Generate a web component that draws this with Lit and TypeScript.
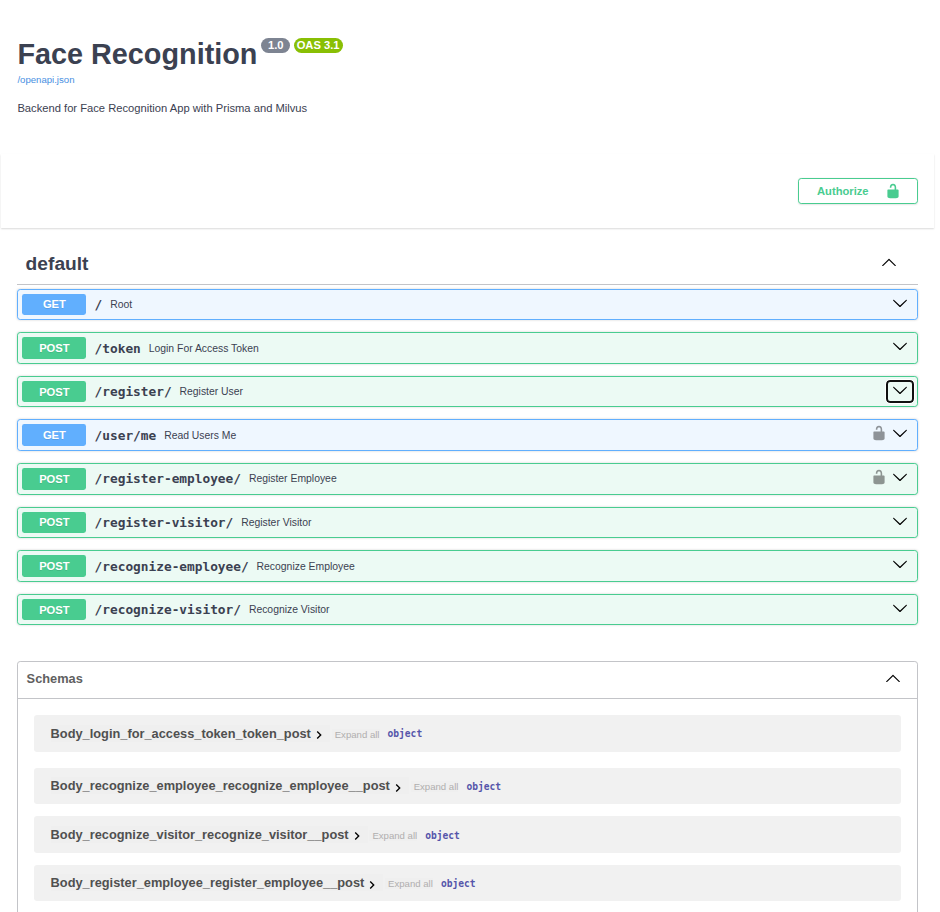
import { LitElement, html, css, svg, nothing } from "lit";
import { customElement, property } from "lit/decorators.js";
import { classMap } from "lit/directives/class-map.js";

const ARROW_UP =
  "M 17.418 14.908 C 17.69 15.176 18.127 15.176 18.397 14.908 C 18.667 14.64 18.668 14.207 18.397 13.939 L 10.489 6.109 C 10.219 5.841 9.782 5.841 9.51 6.109 L 1.602 13.939 C 1.332 14.207 1.332 14.64 1.602 14.908 C 1.873 15.176 2.311 15.176 2.581 14.908 L 10 7.767 L 17.418 14.908 Z";
const ARROW_DOWN =
  "M17.418 6.109c.272-.268.709-.268.979 0s.271.701 0 .969l-7.908 7.83c-.27.268-.707.268-.979 0l-7.908-7.83c-.27-.268-.27-.701 0-.969.271-.268.709-.268.979 0L10 13.25l7.418-7.141z";
const UNLOCKED =
  "M15.8 8H14V5.6C14 2.703 12.665 1 10 1 7.334 1 6 2.703 6 5.6V6h2v-.801C8 3.754 8.797 3 10 3c1.203 0 2 .754 2 2.199V8H4c-.553 0-1 .646-1 1.199V17c0 .549.428 1.139.951 1.307l1.197.387C5.672 18.861 6.55 19 7.1 19h5.8c.549 0 1.428-.139 1.951-.307l1.196-.387c.524-.167.953-.757.953-1.306V9.199C17 8.646 16.352 8 15.8 8z";

const icon = (d: string, cls: string) => html`<svg class=${cls} width="16" height="16" viewBox="0 0 20 20" aria-hidden="true">${svg`<path d=${d}></path>`}</svg>`;

interface Operation {
  method: "GET" | "POST";
  path: string;
  summary: string;
  secured?: boolean;
  focused?: boolean;
}

const OPERATIONS: Operation[] = [
  { method: "GET", path: "/", summary: "Root" },
  { method: "POST", path: "/token", summary: "Login For Access Token" },
  { method: "POST", path: "/register/", summary: "Register User", focused: true },
  { method: "GET", path: "/user/me", summary: "Read Users Me", secured: true },
  { method: "POST", path: "/register-employee/", summary: "Register Employee", secured: true },
  { method: "POST", path: "/register-visitor/", summary: "Register Visitor" },
  { method: "POST", path: "/recognize-employee/", summary: "Recognize Employee" },
  { method: "POST", path: "/recognize-visitor/", summary: "Recognize Visitor" },
];

const SCHEMAS = [
  "Body_login_for_access_token_token_post",
  "Body_recognize_employee_recognize_employee__post",
  "Body_recognize_visitor_recognize_visitor__post",
  "Body_register_employee_register_employee__post",
];

@customElement("operation-row")
export class OperationRow extends LitElement {
  @property({ attribute: false }) op!: Operation;

  static styles = css`
    :host {
      display: block;
    }
    .row {
      display: flex;
      align-items: center;
      box-sizing: border-box;
      height: 31.6px;
      padding: 4px 9px 4px 4px;
      border: 1px solid #49cc90;
      border-radius: 3.2px;
      background: rgba(73, 204, 144, 0.1);
      box-shadow: 0 0 2.4px rgba(0, 0, 0, 0.19);
    }
    .row.get {
      border-color: #61affe;
      background: rgba(97, 175, 254, 0.1);
    }
    .method {
      box-sizing: border-box;
      width: 64px;
      height: 21.6px;
      padding: 0.8px 0 0 0.8px;
      line-height: 21.6px;
      border-radius: 2.4px;
      background: #49cc90;
      color: #fff;
      font-size: 11.2px;
      font-weight: 700;
      text-align: center;
      text-shadow: 0 0.8px 0 rgba(0, 0, 0, 0.1);
    }
    .get .method {
      background: #61affe;
    }
    .path {
      margin-left: 8.6px;
      font: 600 12.8px/15px "DejaVu Sans Mono", monospace;
      color: #3b4151;
      padding-top: 0.2px;
    }
    .summary {
      flex: 1;
      margin-left: 7.9px;
      padding-top: 1.2px;
      font-size: 10.4px;
      line-height: 12px;
      color: #3b4151;
    }
    .lock {
      opacity: 0.4;
      margin: 0 5px 3.8px 0;
    }
    .toggle {
      display: flex;
      margin-bottom: 3.6px;
    }
    .focused .toggle {
      margin: 0 -6px 0 0;
      padding: 0 4px 3px;
      border: 2px solid #101010;
      border-radius: 4px;
      outline: 1px solid #fff;
      height: 16px;
    }
  `;

  render() {
    const { method, path, summary, secured, focused } = this.op;
    return html`<div class=${classMap({ row: true, get: method === "GET", focused: !!focused })}>
      <span class="method">${method}</span>
      <span class="path">${path}</span>
      <span class="summary">${summary}</span>
      ${secured ? icon(UNLOCKED, "lock") : nothing}
      <span class="toggle">${icon(ARROW_DOWN, "arrow")}</span>
    </div>`;
  }
}

@customElement("schema-row")
export class SchemaRow extends LitElement {
  @property() name = "";

  static styles = css`
    :host {
      display: block;
    }
    .box {
      display: flex;
      align-items: center;
      box-sizing: border-box;
      height: 36.6px;
      padding: 0 16.6px 0.25px;
      border-radius: 3.2px;
      background: #f1f1f1;
    }
    .name {
      display: flex;
      align-items: center;
      height: 17px;
      padding-right: 3px;
      background: #efefef;
      font-size: 12.8px;
      font-weight: 600;
      color: #505050;
    }
    .caret {
      margin: 3.6px 0 0 0;
    }
    .expand {
      margin: 2px 8px 0 1.8px;
      padding-left: 3px;
      background: #efefef;
      font-size: 9.6px;
      line-height: 11px;
      color: #afaeae;
    }
    .type {
      font: 600 9.6px/12px "DejaVu Sans Mono", monospace;
      color: #55a;
      padding-top: 2.7px;
    }
  `;

  render() {
    return html`<div class="box">
      <span class="name">${this.name}<svg class="caret" width="16" height="16" viewBox="0 0 24 24"><path d="M10 6L8.59 7.41 13.17 12l-4.58 4.59L10 18l6-6z"></path></svg></span>
      <span class="expand">Expand all</span>
      <span class="type">object</span>
    </div>`;
  }
}

@customElement("app-root")
export class AppRoot extends LitElement {
  static styles = css`
    :host {
      display: block;
      box-sizing: border-box;
      height: 912px;
      overflow: hidden;
      padding: 0 6px 0 1px;
      background: #fff;
      font-family: "Liberation Sans", Arial, sans-serif;
      color: #3b4151;
    }
    .info {
      padding: 37px 16.4px 0;
      height: 117px;
    }
    .heading {
      display: flex;
      align-items: flex-start;
      height: 37px;
    }
    .title {
      margin: 0;
      font-size: 28.8px;
      line-height: 34px;
      font-weight: 700;
    }
    .badge {
      margin: 1px 0 0 4px;
      padding: 0 3.2px;
      height: 15px;
      line-height: 15px;
      border-radius: 45.6px;
      background: #7d8492;
      color: #fff;
      font-size: 11.2px;
      font-weight: 700;
    }
    .badge.version {
      padding: 0 6.6px;
    }
    .badge.oas {
      padding: 0 3.7px 0 2.5px;
      background: #89bf04;
    }
    .link {
      display: block;
      font-size: 9.6px;
      line-height: 12px;
      color: #4990e2;
    }
    .description {
      margin: 15px 0 0;
      font-size: 11.2px;
      line-height: 14px;
    }
    .scheme {
      display: flex;
      justify-content: flex-end;
      box-sizing: border-box;
      height: 74px;
      padding: 24px 16px 0;
      box-shadow: 0 1px 1.6px rgba(0, 0, 0, 0.15);
    }
    .authorize {
      display: flex;
      align-items: center;
      justify-content: space-between;
      box-sizing: border-box;
      width: 120px;
      height: 26px;
      padding: 0 16px 0 18px;
      border: 1px solid #49cc90;
      border-radius: 3.2px;
      background: transparent;
      box-shadow: 0 0.8px 1.6px rgba(0, 0, 0, 0.1);
      color: #49cc90;
      font: 700 11.2px "Liberation Sans", Arial, sans-serif;
    }
    .authorize svg {
      fill: #49cc90;
    }
    .content {
      padding: 0 16px;
    }
    .tag {
      display: flex;
      align-items: center;
      justify-content: space-between;
      box-sizing: border-box;
      height: 42px;
      margin-top: 15px;
      padding: 1px 21px 0 8.6px;
      border-bottom: 1px solid #c3c4c8;
      font-size: 19.2px;
      font-weight: 700;
    }
    .tag svg {
      margin-bottom: 3.6px;
    }
    .operations {
      display: grid;
      row-gap: 12px;
      padding-top: 3.6px;
    }
    .models {
      margin-top: 35.6px;
      border: 1px solid #c3c4c8;
      border-radius: 3.2px;
      height: 300px;
    }
    .models-head {
      display: flex;
      align-items: center;
      justify-content: space-between;
      box-sizing: border-box;
      height: 37px;
      padding: 0 16px 2px 8.6px;
      border-bottom: 1px solid #c3c4c8;
      font-size: 12.8px;
      font-weight: 700;
      color: #606060;
    }
    .models-head svg {
      margin-bottom: 1px;
    }
    .models-list {
      display: grid;
      row-gap: 12px;
      padding: 16px 16px 0;
    }
    .models-list > :first-child {
      margin-bottom: 4px;
    }
  `;

  render() {
    return html`
      <header class="info">
        <div class="heading">
          <h2 class="title">Face Recognition</h2>
          <span class="badge version">1.0</span>
          <span class="badge oas">OAS 3.1</span>
        </div>
        <a class="link">/openapi.json</a>
        <p class="description">Backend for Face Recognition App with Prisma and Milvus</p>
      </header>
      <section class="scheme">
        <button class="authorize"><span>Authorize</span>${icon(UNLOCKED, "lock")}</button>
      </section>
      <main class="content">
        <div class="tag"><span>default</span>${icon(ARROW_UP, "arrow")}</div>
        <div class="operations">${OPERATIONS.map((op) => html`<operation-row .op=${op}></operation-row>`)}</div>
        <section class="models">
          <div class="models-head"><span>Schemas</span>${icon(ARROW_UP, "arrow")}</div>
          <div class="models-list">${SCHEMAS.map((name) => html`<schema-row .name=${name}></schema-row>`)}</div>
        </section>
      </main>
    `;
  }
}
